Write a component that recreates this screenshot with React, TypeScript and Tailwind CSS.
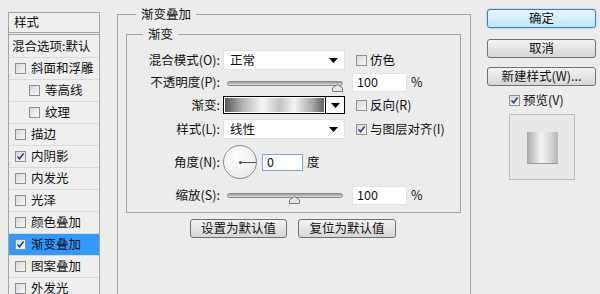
const font = { fontFamily: '"Noto Sans CJK SC", "Liberation Sans", sans-serif' }

function Check({ on = false }: { on?: boolean }) {
  return (
    <span className="relative inline-block w-[11px] h-[11px] shrink-0 border border-[#8f8f8f] bg-gradient-to-br from-[#d8d8d8] to-[#f8f8f8]">
      {on && (
        <svg viewBox="0 0 9 9" className="absolute inset-0 w-[9px] h-[9px]">
          <path d="M1.5 4.5 L3.6 6.8 L7.6 1.6" fill="none" stroke="#2a3f8f" strokeWidth="1.6" />
        </svg>
      )}
    </span>
  )
}

function Row({ label, on, indent, selected }: { label: string; on?: boolean; indent?: boolean; selected?: boolean }) {
  return (
    <div
      className={`h-[22px] flex items-center gap-[5px] border-b border-[#d9d9d9] ${indent ? 'pl-[20px]' : 'pl-[6px]'} ${selected ? 'bg-[#3399ff]' : ''}`}
    >
      <Check on={on} />
      <span className="leading-none">{label}</span>
    </div>
  )
}

function Arrow() {
  return (
    <svg viewBox="0 0 9 5" className="w-[9px] h-[5px]">
      <path d="M0 0 H9 L4.5 5 Z" fill="#000" />
    </svg>
  )
}

function Slider({ pos }: { pos: number }) {
  return (
    <div className="relative w-[122px] h-[18px]">
      <div className="absolute left-[4px] right-[2px] top-[7px] h-[5px] rounded-full border border-[#8a8a8a] bg-gradient-to-b from-[#9c9c9c] to-[#dcdcdc]" />
      <svg viewBox="0 0 11 8" className="absolute top-[10px] w-[11px] h-[8px]" style={{ left: pos - 5 }}>
        <path d="M0.5 7.5 V4 L5.5 0.5 L10.5 4 V7.5 Z" fill="#e8e8e8" stroke="#7a7a7a" />
      </svg>
    </div>
  )
}

function Btn({ children, primary, w }: { children: React.ReactNode; primary?: boolean; w: string }) {
  return (
    <div
      className={`${w} h-[19px] rounded-[3px] border flex items-center justify-center leading-none ${
        primary
          ? 'border-[#3c7fb1] bg-gradient-to-b from-[#eaf6fd] to-[#bee6fd] shadow-[0_0_2px_#5ab4f0]'
          : 'border-[#707070] bg-gradient-to-b from-[#f3f3f3] to-[#d6d6d6]'
      }`}
    >
      {children}
    </div>
  )
}

export default function App() {
  return (
    <div className="w-[600px] h-[294px] overflow-hidden bg-[#ececec] flex items-start text-[12.5px] text-[#111]" style={font}>
      {/* left style list */}
      <div className="ml-[8px] mt-[12px] w-[92px] shrink-0 border border-[#a3a3a3] bg-[#efefef]">
        <div className="h-[22px] flex items-center pl-[5px] border-b-[3px] border-double border-[#a3a3a3] leading-none">样式</div>
        <div className="h-[23px] flex items-center pl-[3px] border-b border-[#d9d9d9] leading-none whitespace-nowrap">混合选项:默认</div>
        <Row label="斜面和浮雕" />
        <Row label="等高线" indent />
        <Row label="纹理" indent />
        <Row label="描边" />
        <Row label="内阴影" on />
        <Row label="内发光" />
        <Row label="光泽" />
        <Row label="颜色叠加" />
        <Row label="渐变叠加" on selected />
        <Row label="图案叠加" />
        <Row label="外发光" />
      </div>

      {/* main settings */}
      <fieldset className="ml-[17px] mt-[6px] w-[354px] h-[320px] shrink-0 border border-[#a3a3a3] pl-[8px] pr-[9px]">
        <legend className="ml-[10px] px-[5px] leading-[16px]">渐变叠加</legend>
        <fieldset className="mt-[4px] border border-[#a3a3a3] pb-[8px]">
          <legend className="ml-[16px] px-[5px] leading-[16px]">渐变</legend>

          <div className="mt-[8px] h-[20px] flex items-center">
            <span className="w-[93px] text-right">混合模式(O):</span>
            <div className="ml-[3px] w-[122px] h-[20px] bg-white border border-[#e2e2e2] flex items-center justify-between pl-[6px] pr-[6px]">
              <span>正常</span>
              <Arrow />
            </div>
            <div className="ml-[11px] flex items-center gap-[3px]">
              <Check />
              <span>仿色</span>
            </div>
          </div>

          <div className="mt-[3px] h-[19px] flex items-center">
            <span className="w-[93px] text-right">不透明度(P):</span>
            <div className="ml-[3px]">
              <Slider pos={114} />
            </div>
            <div className="ml-[7px] w-[55px] h-[19px] bg-white border border-[#e2e2e2] flex items-center pl-[4px]">100</div>
            <span className="ml-[4px]">%</span>
          </div>

          <div className="mt-[4px] h-[18px] flex items-center">
            <span className="w-[93px] text-right">渐变:</span>
            <div className="ml-[3px] w-[122px] h-[18px] border border-black flex bg-white">
              <div className="flex-1 m-[1px] bg-[linear-gradient(to_right,#585858_0%,#b4b4b4_18%,#f6f6f6_38%,#c2c2c2_55%,#f2f2f2_70%,#a8a8a8_88%,#626262_100%)]" />
              <div className="w-[19px] border-l border-black flex items-center justify-center">
                <Arrow />
              </div>
            </div>
            <div className="ml-[11px] flex items-center gap-[3px]">
              <Check />
              <span>反向(R)</span>
            </div>
          </div>

          <div className="mt-[5px] h-[20px] flex items-center">
            <span className="w-[93px] text-right">样式(L):</span>
            <div className="ml-[3px] w-[122px] h-[20px] bg-white border border-[#e2e2e2] flex items-center justify-between pl-[6px] pr-[6px]">
              <span>线性</span>
              <Arrow />
            </div>
            <div className="ml-[11px] flex items-center gap-[3px]">
              <Check on />
              <span>与图层对齐(I)</span>
            </div>
          </div>

          <div className="mt-[6px] h-[34px] flex items-center">
            <span className="w-[93px] text-right">角度(N):</span>
            <div className="ml-[3px] relative w-[34px] h-[34px] rounded-full border border-[#8a8a8a] bg-[radial-gradient(circle_at_40%_35%,#ffffff,#e4e4e4)]">
              <div className="absolute left-[15px] top-[15px] w-[3px] h-[3px] rounded-full bg-[#555]" />
              <div className="absolute left-[17px] top-[16px] w-[15px] h-px bg-[#555]" />
            </div>
            <div className="ml-[5px] w-[41px] h-[17px] bg-white border border-[#7aa7d6] flex items-center pl-[4px]">0</div>
            <span className="ml-[4px]">度</span>
          </div>

          <div className="mt-[7px] h-[18px] flex items-center">
            <span className="w-[93px] text-right">缩放(S):</span>
            <div className="ml-[3px]">
              <Slider pos={71} />
            </div>
            <div className="ml-[7px] w-[55px] h-[19px] bg-white border border-[#e2e2e2] flex items-center pl-[4px]">100</div>
            <span className="ml-[4px]">%</span>
          </div>
        </fieldset>

        <div className="mt-[6px] flex gap-[11px] pl-[64px]">
          <Btn w="w-[97px]">设置为默认值</Btn>
          <Btn w="w-[98px]">复位为默认值</Btn>
        </div>
      </fieldset>

      {/* right buttons */}
      <div className="ml-[16px] w-[109px] shrink-0 flex flex-col">
        <div className="mt-[9px]">
          <Btn w="w-[109px]" primary>确定</Btn>
        </div>
        <div className="mt-[11px]">
          <Btn w="w-[109px]">取消</Btn>
        </div>
        <div className="mt-[9px]">
          <Btn w="w-[109px]">新建样式(W)...</Btn>
        </div>
        <div className="mt-[6px] h-[16px] pl-[22px] flex items-center gap-[3px]">
          <Check on />
          <span>预览(V)</span>
        </div>
        <div className="mt-[6px] ml-[22px] w-[66px] h-[66px] border border-[#bdbdbd] bg-[#e8e8e8] flex items-start justify-center">
          <div className="mt-[17px] w-[31px] h-[32px] border-b border-[#9a9a9a] bg-[linear-gradient(to_right,#a8a8a8,#f4f4f4_45%,#d8d8d8_75%,#b4b4b4)]" />
        </div>
      </div>
    </div>
  )
}
